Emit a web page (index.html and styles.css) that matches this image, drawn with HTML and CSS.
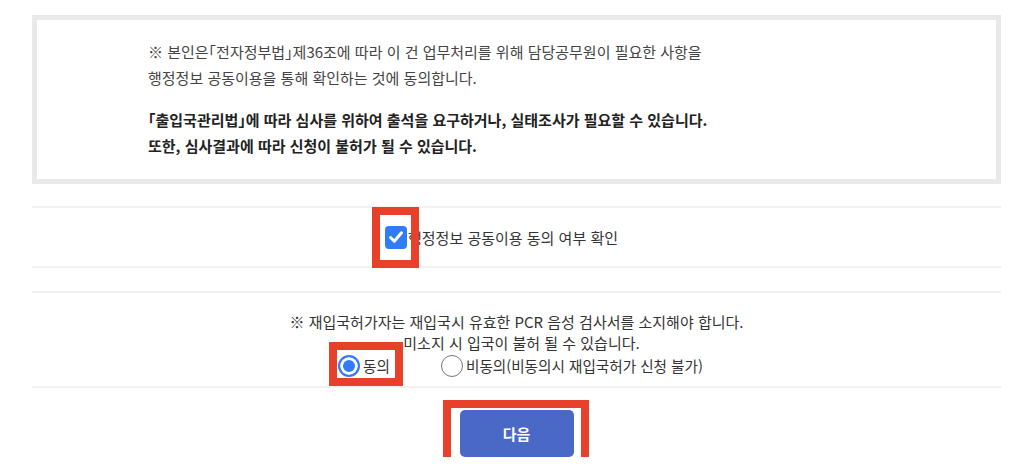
FILE: index.html
```html
<!DOCTYPE html>
<html lang="ko">
  <head>
    <meta charset="UTF-8" />
    <meta name="viewport" content="width=device-width, initial-scale=1.0" />
    <title>재입국허가 신청</title>
    <link rel="stylesheet" href="styles.css">
  </head>
  <body>
    <div class="page">
      <div class="notice-box">
        <p>※ 본인은「전자정부법」제36조에 따라 이 건 업무처리를 위해 담당공무원이 필요한 사항을<br>행정정보 공동이용을 통해 확인하는 것에 동의합니다.</p>
        <p class="strong">「출입국관리법」에 따라 심사를 위하여 출석을 요구하거나, 실태조사가 필요할 수 있습니다.<br>또한, 심사결과에 따라 신청이 불허가 될 수 있습니다.</p>
      </div>

      <div class="agree-row">
        <label class="check">
          <span class="check-mark">
            <svg width="22" height="22" viewBox="0 0 22 22">
              <path d="M5.5 11.5 L9.3 15.2 L16.5 6.8" fill="none" stroke="#fff" stroke-width="3" stroke-linecap="round" stroke-linejoin="round" />
            </svg>
          </span>
          <span class="check-text">행정정보 공동이용 동의 여부 확인</span>
        </label>
      </div>

      <div class="pcr">
        <p>※ 재입국허가자는 재입국시 유효한 PCR 음성 검사서를 소지해야 합니다.<br><span class="sub">미소지 시 입국이 불허 될 수 있습니다.</span></p>
        <div class="radios">
          <label class="radio marked"><span class="dot on"></span>동의</label>
          <label class="radio"><span class="dot"></span>비동의(비동의시 재입국허가 신청 불가)</label>
        </div>
      </div>

      <div class="actions">
        <button class="next">다음</button>
      </div>
    </div>
  </body>
</html>
```

FILE: styles.css
```css
body {
  margin: 0;
  background: #fff;
  font-family: "Noto Sans CJK KR", "Noto Sans", sans-serif;
  color: #444;
}
.page {
  width: 969px;
  margin: 15px 0 0 32px;
}
.notice-box {
  border: 5px solid #e9e9e9;
  padding: 19px 20px 20px 111px;
  font-size: 15px;
  line-height: 26px;
  font-feature-settings: "halt";
}
.notice-box p {
  margin: 0;
}
.notice-box .strong {
  margin-top: 16px;
  font-weight: bold;
  color: #222;
}
.agree-row {
  margin-top: 22px;
  height: 58px;
  border-top: 2px solid #f1f1f1;
  border-bottom: 2px solid #f1f1f1;
  display: flex;
  justify-content: center;
  align-items: center;
}
.check {
  display: flex;
  align-items: center;
  font-size: 15px;
  color: #333;
  margin-right: 30px;
}
.check-mark {
  position: relative;
  width: 22px;
  height: 23px;
  border-radius: 4px;
  background: #2f7cf6;
  display: flex;
  align-items: center;
  justify-content: center;
  margin-right: 1px;
}
.check-mark::after {
  content: "";
  position: absolute;
  top: -19px;
  bottom: -19px;
  left: -13px;
  right: -12px;
  border: 8px solid #e8412b;
}
.pcr {
  margin-top: 23px;
  border-top: 2px solid #f1f1f1;
  border-bottom: 2px solid #f1f1f1;
  padding: 18px 0 9px;
  text-align: center;
  font-size: 15px;
  line-height: 21px;
  color: #333;
}
.pcr p {
  margin: 0;
}
.pcr .sub {
  padding-left: 10px;
}
.radios {
  display: flex;
  justify-content: center;
  gap: 51px;
  padding-left: 8px;
  margin-top: 2px;
}
.radio {
  position: relative;
  display: flex;
  align-items: center;
  gap: 3px;
  font-size: 14.6px;
  line-height: 22px;
}
.radio.marked::after {
  content: "";
  position: absolute;
  top: -13px;
  bottom: -9px;
  left: -9px;
  right: -13px;
  border: 8px solid #e8412b;
}
.dot {
  width: 20px;
  height: 20px;
  border: 1px solid #777;
  border-radius: 50%;
  background: #fff;
}
.dot.on {
  border: 2px solid #2f7cf6;
  width: 18px;
  height: 18px;
  background: #2f7cf6;
  box-shadow: inset 0 0 0 3px #fff;
}
.actions {
  display: flex;
  justify-content: center;
  padding-top: 22px;
}
.next {
  position: relative;
  width: 114px;
  height: 47px;
  border: none;
  border-radius: 5px;
  background: #4a69c6;
  color: #fff;
  font-family: inherit;
  font-size: 15px;
  font-weight: bold;
}
.next::after {
  content: "";
  position: absolute;
  top: -10px;
  bottom: -8px;
  left: -17px;
  right: -15px;
  border: 8px solid #e8412b;
}
```
